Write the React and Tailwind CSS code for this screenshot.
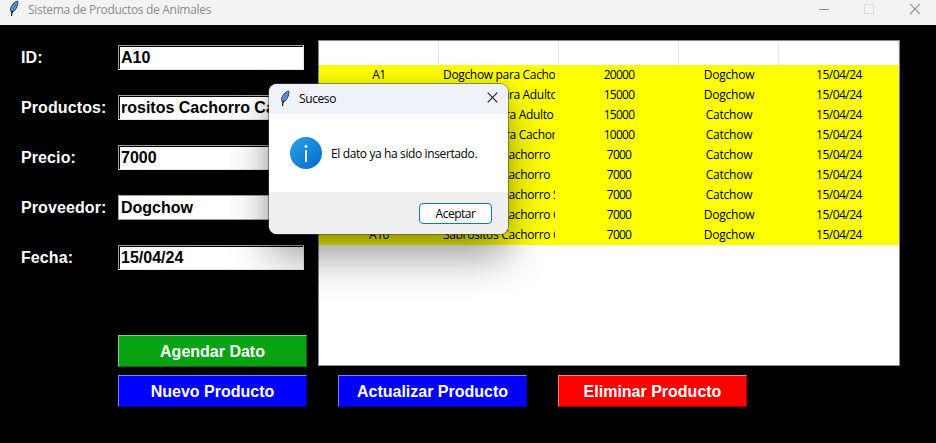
import React from "react";

const FIELDS = [
  { label: "ID:", value: "A10" },
  { label: "Productos:", value: "rositos Cachorro Ca" },
  { label: "Precio:", value: "7000" },
  { label: "Proveedor:", value: "Dogchow", flat: true },
  { label: "Fecha:", value: "15/04/24" },
];

const ROWS = [
  ["A1", "Dogchow para Cachorro", "20000", "Dogchow", "15/04/24"],
  ["A2", "Dogchow para Adulto", "15000", "Dogchow", "15/04/24"],
  ["A3", "Catchow para Adulto", "15000", "Catchow", "15/04/24"],
  ["A4", "Catchow para Cachorro", "10000", "Catchow", "15/04/24"],
  ["A5", "Sabrositos Cachorro", "7000", "Catchow", "15/04/24"],
  ["A6", "Sabrositos Cachorro", "7000", "Catchow", "15/04/24"],
  ["A7", "Sabrositos Cachorro S", "7000", "Catchow", "15/04/24"],
  ["A9", "Sabrositos Cachorro Carne", "7000", "Dogchow", "15/04/24"],
  ["A10", "Sabrositos Cachorro Carne", "7000", "Dogchow", "15/04/24"],
];

const COLS = "grid grid-cols-[120px_120px_120px_100px_120px]";

function Feather({ className }) {
  return (
    <svg className={className} width="11" height="17" viewBox="0 0 11 17">
      <path d="M8.500 1 C5.500 1.800 2 5.500 1.500 9.500 L2.400 12.500 C5.500 11.500 7 9 8 6.500 C8.900 4.500 9.200 2.500 8.500 1Z" fill="#5c9ee6" stroke="#1c2733" strokeWidth="0.900" />
      <path d="M7 3.500 C5.500 6 4 9 3.200 12" fill="none" stroke="#2d5f9e" strokeWidth="0.700" />
      <path d="M3.300 11 L2.500 16" fill="none" stroke="#0b1118" strokeWidth="1.200" />
    </svg>
  );
}

function Field({ label, value, flat }) {
  return (
    <div className="flex h-[25px] items-center">
      <span className="w-[97px] tracking-[0.1px] whitespace-nowrap text-white">{label}</span>
      <div
        className={`h-[25px] w-[186px] border ${
          flat ? "border-[#a0a0a0]" : "border-t-[#a0a0a0] border-r-[#e8e8e8] border-b-[#e3e3e3] border-l-[#a0a0a0]"
        }`}
      >
        <div
          className={`h-[23px] overflow-hidden border-t border-l bg-white pl-px leading-[21px] whitespace-nowrap text-black ${
            flat ? "border-white" : "border-black"
          }`}
        >
          {value}
        </div>
      </div>
    </div>
  );
}

function Action({ children, className }) {
  return (
    <button className={`flex h-8 w-[189px] items-center justify-center border pt-0.5 text-white ${className}`}>
      {children}
    </button>
  );
}

export default function App() {
  return (
    <div className="relative flex h-[443px] w-[936px] flex-col overflow-hidden bg-black font-['Liberation_Sans',Arial,sans-serif] text-base font-bold">
      <header className="flex h-[25px] items-start bg-[#f3f3f3] pl-[9px] font-['Open_Sans',sans-serif] font-normal">
        <Feather className="mr-2" />
        <span className="mt-px text-[12px] leading-[18px] tracking-[-0.31px] text-[#8c8c8c]">Sistema de Productos de Animales</span>
        <svg className="ml-auto" width="118" height="19" viewBox="0 0 118 19" fill="none">
          <path d="M1 9.500h10" stroke="#8a8a8a" />
          <rect x="46.500" y="4.500" width="9" height="9" stroke="#dcdcdc" />
          <path d="M92.200 4.200l9.600 9.600M101.800 4.200l-9.600 9.600" stroke="#8a8a8a" strokeWidth="1.100" />
        </svg>
      </header>

      <main className="pt-[15px] pl-[21px]">
        <div className="flex">
          <section className="w-[297px] pt-[5px]">
            <div className="flex flex-col gap-[25px]">
              {FIELDS.map((f) => (
                <Field key={f.label} {...f} />
              ))}
            </div>
            <div className="mt-[65px] ml-[97px]">
              <Action className="border-t-[#80d088] border-r-[#046609] border-b-[#046609] border-l-[#80d088] bg-[#07a312]">Agendar Dato</Action>
            </div>
          </section>

          <section className="h-[326px] w-[582px] border border-[#828790] bg-white font-['Open_Sans',sans-serif] text-[12px] font-normal text-black">
            <div className={`${COLS} h-6`}>
              {[0, 1, 2, 3, 4].map((n) => (
                <div key={n} className="border-r border-[#e5e5e5]" />
              ))}
            </div>
            {ROWS.map((row) => (
              <div key={row[0]} className={`${COLS} h-5 bg-[#ffff00] text-center leading-[19px] whitespace-nowrap`}>
                <span className="tracking-[-0.5px]">{row[0]}</span>
                <span className="mr-1 ml-1 h-5 overflow-hidden text-left tracking-[-0.33px]">{row[1]}</span>
                <span className="tracking-[-0.75px]">{row[2]}</span>
                <span className="tracking-[-0.2px]">{row[3]}</span>
                <span className="tracking-[-0.5px]">{row[4]}</span>
              </div>
            ))}
          </section>
        </div>

        <div className="mt-2 ml-[97px] flex">
          <Action className="border-t-[#8080ff] border-r-[#00009c] border-b-[#00009c] border-l-[#8080ff] bg-[#0000ff]">Nuevo Producto</Action>
          <Action className="ml-[31px] border-t-[#8080ff] border-r-[#00009c] border-b-[#00009c] border-l-[#8080ff] bg-[#0000ff]">Actualizar Producto</Action>
          <Action className="ml-[31px] border-t-[#ff8080] border-r-[#9c0000] border-b-[#9c0000] border-l-[#ff8080] bg-[#ff0000]">Eliminar Producto</Action>
        </div>
      </main>

      <div role="dialog" className="absolute top-[84px] left-[269px] flex h-[150px] w-[239px] flex-col overflow-hidden rounded-lg bg-white font-['Open_Sans',sans-serif] text-[12px] font-normal text-black shadow-[0_0_0_1px_rgba(70,70,70,0.55),0_22px_42px_rgba(0,0,0,0.4),0_0_14px_rgba(0,0,0,0.12)]">
        <div className="flex h-[30px] items-center bg-[#eff3f9] pl-[11px]">
          <Feather className="mr-2 mb-0.5" />
          <span className="tracking-[-0.4px]">Suceso</span>
          <svg className="mr-[10px] mb-[3px] ml-auto" width="11" height="11" viewBox="0 0 11 11">
            <path d="M0.700 0.700l9.600 9.600M10.300 0.700l-9.600 9.600" stroke="#1a1a1a" strokeWidth="1.100" />
          </svg>
        </div>
        <div className="flex h-[78px] items-center pl-[21px]">
          <svg width="32" height="32" viewBox="0 0 32 32">
            <defs>
              <linearGradient id="info" x1="0" y1="0" x2="1" y2="1">
                <stop offset="0" stopColor="#2aa4e6" />
                <stop offset="1" stopColor="#0069cf" />
              </linearGradient>
            </defs>
            <circle cx="16" cy="16" r="16" fill="url(#info)" />
            <circle cx="16" cy="9.500" r="1.400" fill="#fff" />
            <path d="M16 13v12" stroke="#fff" strokeWidth="1.800" />
          </svg>
          <span className="ml-[9px] pt-0.5 tracking-[-0.38px] whitespace-nowrap">El dato ya ha sido insertado.</span>
        </div>
        <div className="flex h-[42px] justify-end bg-[#efefef] pt-[11px] pr-4">
          <button className="h-[21px] w-[73px] rounded border border-[#0078d4] bg-[#fdfdfd] leading-[20px] tracking-[-0.5px]">Aceptar</button>
        </div>
      </div>
    </div>
  );
}
